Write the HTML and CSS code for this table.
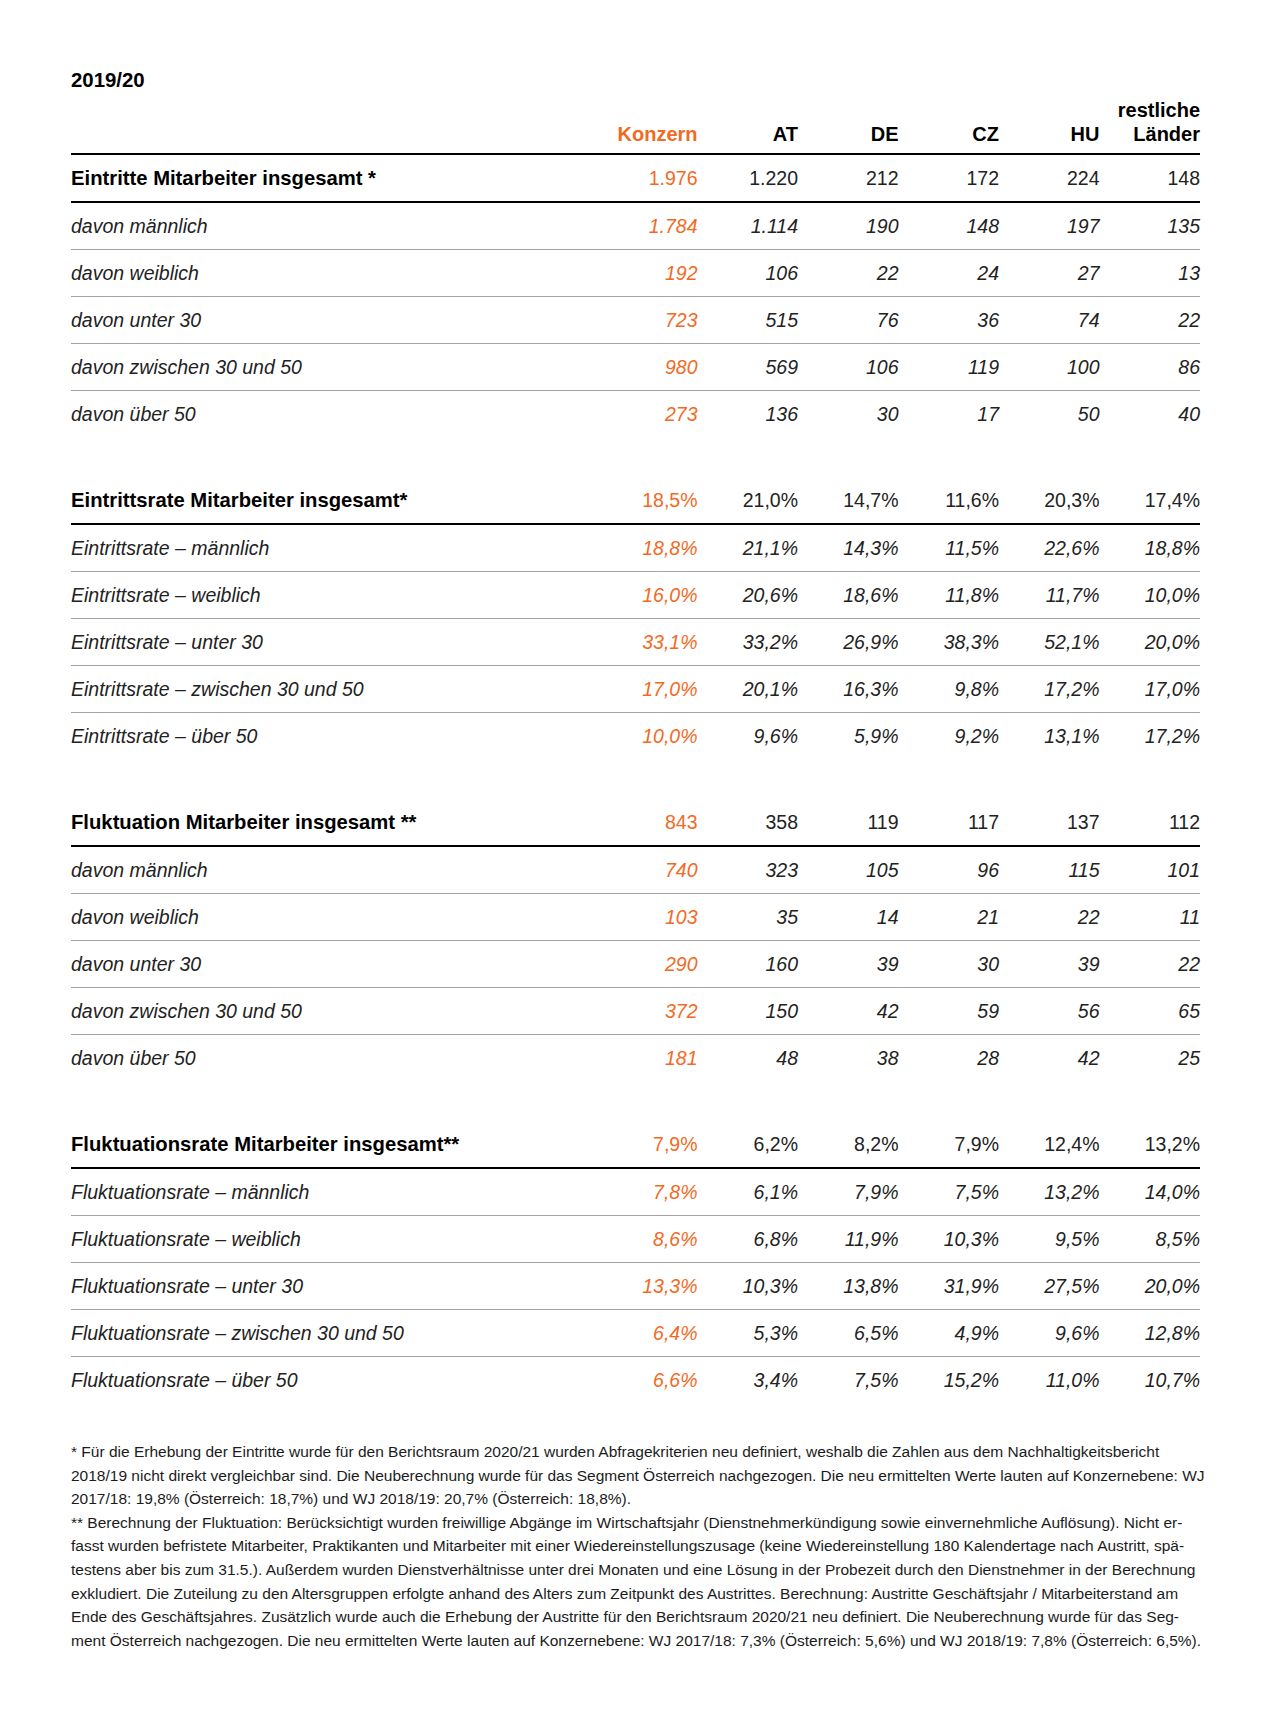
FILE: index.html
```html
<!DOCTYPE html>
<html lang="de">
<head>
<meta charset="utf-8">
<title>Eintritte und Fluktuation 2019/20</title>
<link rel="stylesheet" href="styles.css">
</head>
<body>
<div class="page">
  <div class="title">2019/20</div>
  <div class="row colhead">
    <div class="label"></div>
    <div class="num orange">Konzern</div>
    <div class="num">AT</div>
    <div class="num">DE</div>
    <div class="num">CZ</div>
    <div class="num">HU</div>
    <div class="num">restliche<br>Länder</div>
  </div>

  <section class="group">
    <div class="row head"><div class="label">Eintritte Mitarbeiter insgesamt *</div><div class="num orange">1.976</div><div class="num">1.220</div><div class="num">212</div><div class="num">172</div><div class="num">224</div><div class="num">148</div></div>
    <div class="row sub"><div class="label">davon männlich</div><div class="num orange">1.784</div><div class="num">1.114</div><div class="num">190</div><div class="num">148</div><div class="num">197</div><div class="num">135</div></div>
    <div class="row sub"><div class="label">davon weiblich</div><div class="num orange">192</div><div class="num">106</div><div class="num">22</div><div class="num">24</div><div class="num">27</div><div class="num">13</div></div>
    <div class="row sub"><div class="label">davon unter 30</div><div class="num orange">723</div><div class="num">515</div><div class="num">76</div><div class="num">36</div><div class="num">74</div><div class="num">22</div></div>
    <div class="row sub"><div class="label">davon zwischen 30 und 50</div><div class="num orange">980</div><div class="num">569</div><div class="num">106</div><div class="num">119</div><div class="num">100</div><div class="num">86</div></div>
    <div class="row sub"><div class="label">davon über 50</div><div class="num orange">273</div><div class="num">136</div><div class="num">30</div><div class="num">17</div><div class="num">50</div><div class="num">40</div></div>
  </section>

  <section class="group">
    <div class="row head"><div class="label">Eintrittsrate Mitarbeiter insgesamt*</div><div class="num orange">18,5%</div><div class="num">21,0%</div><div class="num">14,7%</div><div class="num">11,6%</div><div class="num">20,3%</div><div class="num">17,4%</div></div>
    <div class="row sub"><div class="label">Eintrittsrate – männlich</div><div class="num orange">18,8%</div><div class="num">21,1%</div><div class="num">14,3%</div><div class="num">11,5%</div><div class="num">22,6%</div><div class="num">18,8%</div></div>
    <div class="row sub"><div class="label">Eintrittsrate – weiblich</div><div class="num orange">16,0%</div><div class="num">20,6%</div><div class="num">18,6%</div><div class="num">11,8%</div><div class="num">11,7%</div><div class="num">10,0%</div></div>
    <div class="row sub"><div class="label">Eintrittsrate – unter 30</div><div class="num orange">33,1%</div><div class="num">33,2%</div><div class="num">26,9%</div><div class="num">38,3%</div><div class="num">52,1%</div><div class="num">20,0%</div></div>
    <div class="row sub"><div class="label">Eintrittsrate – zwischen 30 und 50</div><div class="num orange">17,0%</div><div class="num">20,1%</div><div class="num">16,3%</div><div class="num">9,8%</div><div class="num">17,2%</div><div class="num">17,0%</div></div>
    <div class="row sub"><div class="label">Eintrittsrate – über 50</div><div class="num orange">10,0%</div><div class="num">9,6%</div><div class="num">5,9%</div><div class="num">9,2%</div><div class="num">13,1%</div><div class="num">17,2%</div></div>
  </section>

  <section class="group">
    <div class="row head"><div class="label">Fluktuation Mitarbeiter insgesamt **</div><div class="num orange">843</div><div class="num">358</div><div class="num">119</div><div class="num">117</div><div class="num">137</div><div class="num">112</div></div>
    <div class="row sub"><div class="label">davon männlich</div><div class="num orange">740</div><div class="num">323</div><div class="num">105</div><div class="num">96</div><div class="num">115</div><div class="num">101</div></div>
    <div class="row sub"><div class="label">davon weiblich</div><div class="num orange">103</div><div class="num">35</div><div class="num">14</div><div class="num">21</div><div class="num">22</div><div class="num">11</div></div>
    <div class="row sub"><div class="label">davon unter 30</div><div class="num orange">290</div><div class="num">160</div><div class="num">39</div><div class="num">30</div><div class="num">39</div><div class="num">22</div></div>
    <div class="row sub"><div class="label">davon zwischen 30 und 50</div><div class="num orange">372</div><div class="num">150</div><div class="num">42</div><div class="num">59</div><div class="num">56</div><div class="num">65</div></div>
    <div class="row sub"><div class="label">davon über 50</div><div class="num orange">181</div><div class="num">48</div><div class="num">38</div><div class="num">28</div><div class="num">42</div><div class="num">25</div></div>
  </section>

  <section class="group">
    <div class="row head"><div class="label">Fluktuationsrate Mitarbeiter insgesamt**</div><div class="num orange">7,9%</div><div class="num">6,2%</div><div class="num">8,2%</div><div class="num">7,9%</div><div class="num">12,4%</div><div class="num">13,2%</div></div>
    <div class="row sub"><div class="label">Fluktuationsrate – männlich</div><div class="num orange">7,8%</div><div class="num">6,1%</div><div class="num">7,9%</div><div class="num">7,5%</div><div class="num">13,2%</div><div class="num">14,0%</div></div>
    <div class="row sub"><div class="label">Fluktuationsrate – weiblich</div><div class="num orange">8,6%</div><div class="num">6,8%</div><div class="num">11,9%</div><div class="num">10,3%</div><div class="num">9,5%</div><div class="num">8,5%</div></div>
    <div class="row sub"><div class="label">Fluktuationsrate – unter 30</div><div class="num orange">13,3%</div><div class="num">10,3%</div><div class="num">13,8%</div><div class="num">31,9%</div><div class="num">27,5%</div><div class="num">20,0%</div></div>
    <div class="row sub"><div class="label">Fluktuationsrate – zwischen 30 und 50</div><div class="num orange">6,4%</div><div class="num">5,3%</div><div class="num">6,5%</div><div class="num">4,9%</div><div class="num">9,6%</div><div class="num">12,8%</div></div>
    <div class="row sub"><div class="label">Fluktuationsrate – über 50</div><div class="num orange">6,6%</div><div class="num">3,4%</div><div class="num">7,5%</div><div class="num">15,2%</div><div class="num">11,0%</div><div class="num">10,7%</div></div>
  </section>

  <div class="notes">
    <p>* Für die Erhebung der Eintritte wurde für den Berichtsraum 2020/21 wurden Abfragekriterien neu definiert, weshalb die Zahlen aus dem Nachhaltigkeitsbericht<br>2018/19 nicht direkt vergleichbar sind. Die Neuberechnung wurde für das Segment Österreich nachgezogen. Die neu ermittelten Werte lauten auf Konzernebene: WJ<br>2017/18: 19,8% (Österreich: 18,7%) und WJ 2018/19: 20,7% (Österreich: 18,8%).</p>
    <p>** Berechnung der Fluktuation: Berücksichtigt wurden freiwillige Abgänge im Wirtschaftsjahr (Dienstnehmerkündigung sowie einvernehmliche Auflösung). Nicht er-<br>fasst wurden befristete Mitarbeiter, Praktikanten und Mitarbeiter mit einer Wiedereinstellungszusage (keine Wiedereinstellung 180 Kalendertage nach Austritt, spä-<br>testens aber bis zum 31.5.). Außerdem wurden Dienstverhältnisse unter drei Monaten und eine Lösung in der Probezeit durch den Dienstnehmer in der Berechnung<br>exkludiert. Die Zuteilung zu den Altersgruppen erfolgte anhand des Alters zum Zeitpunkt des Austrittes. Berechnung: Austritte Geschäftsjahr / Mitarbeiterstand am<br>Ende des Geschäftsjahres. Zusätzlich wurde auch die Erhebung der Austritte für den Berichtsraum 2020/21 neu definiert. Die Neuberechnung wurde für das Seg-<br>ment Österreich nachgezogen. Die neu ermittelten Werte lauten auf Konzernebene: WJ 2017/18: 7,3% (Österreich: 5,6%) und WJ 2018/19: 7,8% (Österreich: 6,5%).</p>
  </div>
</div>
</body>
</html>
```

FILE: styles.css
```css
html, body {
  margin: 0;
  padding: 0;
  background: #ffffff;
}

body {
  font-family: "Liberation Sans", Arial, sans-serif;
  color: #222222;
}

.page {
  padding: 68px 80px 0 71px;
}

.title {
  font-weight: 700;
  font-size: 20.4px;
  line-height: 24px;
  color: #000;
}

.row {
  display: grid;
  grid-template-columns: 526px repeat(6, 100.5px);
  align-items: center;
}

.num {
  text-align: right;
}

.orange {
  color: #f26a1f;
}

.colhead {
  margin-top: 6px;
  align-items: end;
  padding-bottom: 7px;
  border-bottom: 2px solid #000;
  font-weight: 700;
  font-size: 20px;
  line-height: 24px;
  color: #000;
}

.group + .group {
  margin-top: 40px;
}

.head {
  height: 46px;
  border-bottom: 2px solid #000;
  font-size: 19.5px;
}

.head .label {
  font-weight: 700;
  font-size: 20.25px;
  color: #000;
}

.sub {
  height: 46px;
  border-bottom: 1px solid #a3a3a3;
  font-style: italic;
  font-size: 19.5px;
}

.sub:last-child {
  border-bottom: none;
}

.notes {
  margin-top: 37px;
  font-size: 15.5px;
  line-height: 23.6px;
  color: #1b1b1b;
  white-space: nowrap;
}

.notes p {
  margin: 0;
}
```
